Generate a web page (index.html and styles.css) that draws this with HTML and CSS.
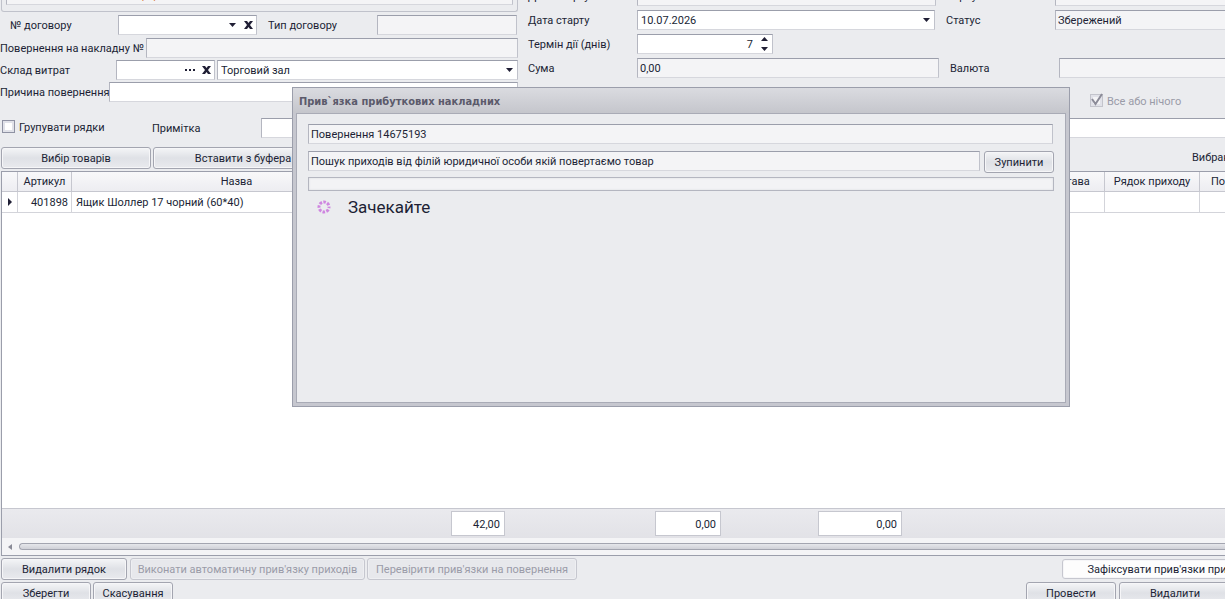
FILE: index.html
```html
<!DOCTYPE html>
<html lang="uk">
<head>
<meta charset="utf-8">
<title>Повернення</title>
<link rel="stylesheet" href="styles.css">
</head>
<body>
<main class="page">
  <form class="form">
    <section class="col">
      <div class="group"><input class="field readonly group-field" aria-label="Форма" value="фор" readonly></div>
      <div class="row row-contract">
        <label class="lbl lbl-contract" for="contract">№ договору</label>
        <div class="combo combo-contract">
          <input class="bare" id="contract">
          <button type="button" class="ic" aria-label="Список"><svg width="7" height="4"><path d="M0 0h7L3.500 4z"/></svg></button>
          <button type="button" class="ic" aria-label="Очистити"><svg width="9" height="8"><path d="M0 0h3l1.500 2L6 0h3L6 4l3 4H6L4.500 6 3 8H0l3-4z"/></svg></button>
        </div>
        <label class="lbl lbl-type" for="ctype">Тип договору</label>
        <input class="field readonly grow" id="ctype" readonly>
      </div>
      <div class="row row-invoice">
        <label class="lbl lbl-invoice" for="invoice">Повернення на накладну №</label>
        <input class="field readonly grow" id="invoice" readonly>
      </div>
      <div class="row row-store">
        <label class="lbl lbl-store" for="store">Склад витрат</label>
        <div class="combo combo-store">
          <input class="bare" id="store">
          <button type="button" class="ic" aria-label="Вибрати"><svg width="10" height="2"><path d="M0 0h2v2H0zM4 0h2v2H4zM8 0h2v2H8z"/></svg></button>
          <button type="button" class="ic" aria-label="Очистити"><svg width="9" height="8"><path d="M0 0h3l1.500 2L6 0h3L6 4l3 4H6L4.500 6 3 8H0l3-4z"/></svg></button>
        </div>
        <div class="combo grow">
          <input class="bare" aria-label="Назва складу" value="Торговий зал">
          <button type="button" class="ic" aria-label="Список"><svg width="7" height="4"><path d="M0 0h7L3.500 4z"/></svg></button>
        </div>
      </div>
      <div class="row row-reason">
        <label class="lbl lbl-reason" for="reason">Причина повернення</label>
        <input class="field grow" id="reason">
      </div>
    </section>

    <section class="col col-mid">
      <div class="row row-cut">
        <label class="lbl lbl-mid" for="created">Дата старту</label>
        <input class="field readonly grow" id="created" readonly>
      </div>
      <div class="row row-start">
        <label class="lbl lbl-mid" for="start">Дата старту</label>
        <div class="combo grow">
          <input class="bare" id="start" value="10.07.2026">
          <button type="button" class="ic" aria-label="Календар"><svg width="7" height="4"><path d="M0 0h7L3.500 4z"/></svg></button>
        </div>
      </div>
      <div class="row">
        <label class="lbl lbl-mid" for="days">Термін дії (днів)</label>
        <div class="combo combo-days">
          <input class="bare num" id="days" value="7">
          <button type="button" class="ic" aria-label="Змінити"><svg width="7" height="14"><path d="M0 4h7L3.500 0zM0 10h7L3.500 14z"/></svg></button>
        </div>
      </div>
      <div class="row row-sum">
        <label class="lbl lbl-mid" for="sum">Сума</label>
        <input class="field readonly grow" id="sum" value="0,00" readonly>
      </div>
    </section>

    <section class="col col-right">
      <div class="row row-cut">
        <label class="lbl lbl-right" for="corp">Корпус</label>
        <input class="field readonly grow open" id="corp" readonly>
      </div>
      <div class="row row-status">
        <label class="lbl lbl-right" for="status">Статус</label>
        <input class="field readonly grow open" id="status" value="Збережений" readonly>
      </div>
      <div class="row row-currency">
        <label class="lbl lbl-right" for="currency">Валюта</label>
        <input class="field readonly grow open" id="currency" readonly>
      </div>
      <label class="check check-all"><input type="checkbox" class="box" checked disabled><span class="check-text">Все або нічого</span><svg class="tick" width="14" height="13"><path d="M2 6l3.500 5L12 1" fill="none" stroke="#8b8b98" stroke-width="2"/></svg></label>
    </section>
  </form>

  <div class="row note">
    <label class="check check-group"><input type="checkbox" class="box"><span class="check-text">Групувати рядки</span></label>
    <label class="lbl lbl-note" for="note">Примітка</label>
    <input class="field grow open" id="note">
  </div>

  <div class="row tools">
    <button type="button" class="btn w150">Вибір товарів</button>
    <button type="button" class="btn w180">Вставити з буфера</button>
    <span class="selected">Вибрано</span>
  </div>

  <section class="grid">
    <div class="rows">
      <table class="table">
        <colgroup><col class="c0"><col class="c1"><col class="c2"><col class="c3"><col class="c4"><col class="c5"><col></colgroup>
        <thead><tr><th></th><th>Артикул</th><th>Назва</th><th></th><th>Підстава</th><th>Рядок приходу</th><th class="cut">Потреба</th></tr></thead>
        <tbody><tr><td class="mark"><svg width="4" height="8"><path d="M0 0l4 4-4 4z"/></svg></td><td class="right">401898</td><td>Ящик Шоллер 17 чорний (60*40)</td><td></td><td></td><td></td><td></td></tr></tbody>
      </table>
    </div>
    <div class="totals">
      <output class="total t1">42,00</output>
      <output class="total t2">0,00</output>
      <output class="total t3">0,00</output>
    </div>
    <div class="scroll"><svg width="4" height="6"><path d="M4 0v6L0 3z" fill="#8a8b97"/></svg><div class="thumb"></div></div>
  </section>

  <div class="row actions">
    <button type="button" class="btn w126">Видалити рядок</button>
    <button type="button" class="btn w235" disabled>Виконати автоматичну прив'язку приходів</button>
    <button type="button" class="btn w210" disabled>Перевірити прив'язки на повернення</button>
    <button type="button" class="btn fix">Зафіксувати прив'язки приходів</button>
  </div>
  <div class="row actions">
    <button type="button" class="btn w90">Зберегти</button>
    <button type="button" class="btn w80">Скасування</button>
    <button type="button" class="btn w90 push">Провести</button>
    <button type="button" class="btn remove">Видалити</button>
  </div>
</main>

<section class="dialog" role="dialog" aria-labelledby="dlg-title">
  <h1 class="title" id="dlg-title">Прив`язка прибуткових накладних</h1>
  <div class="body">
    <input class="field readonly ret" aria-label="Повернення" value="Повернення 14675193" readonly>
    <div class="stage">
      <input class="field readonly grow" aria-label="Етап" value="Пошук приходів від філій юридичної особи якій повертаємо товар" readonly>
      <button type="button" class="btn w70">Зупинити</button>
    </div>
    <div class="progress" role="progressbar" aria-label="Виконання"></div>
    <div class="wait">
      <svg width="14" height="14" viewBox="0 0 14 14"><g fill="none" stroke="#cf86e0" stroke-width="3"><circle cx="7" cy="7" r="5" stroke-dasharray="2.600 1.327" stroke-dashoffset="1.300"/></g></svg>
      <span>Зачекайте</span>
    </div>
  </div>
</section>
</body>
</html>
```
FILE: styles.css
```css
* { box-sizing: border-box; }
html, body { height: 100%; margin: 0; }
body {
  position: relative;
  overflow: hidden;
  background: #ebecef;
  color: #201f35;
  font: 11px/14px Roboto, "Noto Sans", sans-serif;
}
input, button, output { font: inherit; color: inherit; margin: 0; }
svg { display: block; fill: #201f35; }

.page { display: flex; flex-direction: column; height: 100%; }
.form { display: grid; grid-template-columns: minmax(0, 528fr) minmax(0, 411fr) minmax(0, 286fr); height: 108px; }
.col { display: flex; flex-direction: column; padding-right: 10px; }
.col-mid { padding-right: 0; gap: 4px; }
.col-right { padding: 0 0 0 7px; }
.row { display: flex; flex: none; }
.lbl { flex: none; padding-top: 4px; white-space: nowrap; }
.grow { flex: 1; min-width: 0; }

.field, .combo {
  height: 20px;
  border: 1px solid;
  border-color: #9b9eab #c0c2cb #d6d7dd #b4b6c0;
  border-radius: 0;
  background: #fff;
  padding: 0 3px;
  outline: none;
}
.readonly { background: #f4f4f6; padding: 0 2px; }
.open { border-right: 0; }
.combo { display: flex; align-items: center; padding-right: 1px; }
.bare { flex: 1; min-width: 0; border: 0; padding: 2px 0 0; background: none; outline: none; }
.num { text-align: right; padding-right: 5px; }
.ic { border: 0; padding: 0 3px; background: none; }

.group { height: 12px; margin: 0 0 3px 1px; padding: 0 4px; border: 1px solid #c0c2cb; border-top: 0; border-radius: 0 0 3px 3px; }
.group-field { display: block; width: 100%; margin-top: -15px; padding-left: 132px; color: #d9844a; }
.row-contract { margin: 0 1px 3px 0; }
.row-invoice, .row-store { margin-bottom: 2px; }
.lbl-contract { width: 118px; padding-left: 10px; }
.combo-contract { width: 139px; padding-right: 0; }
.combo-contract .ic, .combo-store .ic { padding: 0 3px 0 5px; }
.combo-store .ic + .ic { padding-left: 4px; }
.lbl-type { width: 120px; padding-left: 11px; }
.lbl-invoice { width: 142px; margin-right: 4px; }
.lbl-store { width: 116px; }
.combo-store { width: 99px; margin-right: 2px; padding-right: 0; }
.lbl-reason { width: 109px; }

.row-cut { height: 20px; margin: -14px 3px 0 0; }
.row-start { margin-right: 4px; }
.lbl-mid { width: 109px; }
.combo-days { width: 136px; }
.lbl-right { width: 109px; }
.row-status { margin-top: 4px; }
.row-currency { margin: 28px 0 16px 4px; }
.col-right .row-cut { margin-right: 0; }

.check { display: flex; align-items: center; gap: 4px; white-space: nowrap; }
.check-text { padding-top: 2px; }
.box { appearance: none; width: 13px; height: 13px; border: 1px solid #8f92a3; background: #fff; box-shadow: inset 0 0 0 2px #e1e2e9; }
.box:disabled { border-color: #c3c4cc; background: #f4f4f6; }
.check-all { position: relative; margin-left: 144px; height: 13px; color: #9a9ba8; }
.tick { position: absolute; left: 0; top: -1px; }

.note { margin-top: 10px; }
.check-group { width: 152px; padding-left: 2px; height: 17px; }
.lbl-note { width: 109px; }

.btn {
  flex: none;
  height: 22px;
  padding: 2px 0 0;
  border: 1px solid #a3a5b0;
  border-radius: 3px;
  background: linear-gradient(#f4f5f7, #dfe1e6 50%, #e9eaee);
  box-shadow: inset 0 0 0 1px #f6f6f8;
  white-space: nowrap;
}
.btn:disabled { border-color: #c6c7cf; background: #e7e8ec; color: #9a9ba8; box-shadow: inset 0 0 0 1px #eeeff2; }
.w70 { width: 70px; }
.w80 { width: 80px; }
.w90 { width: 90px; }
.w126 { width: 126px; margin-right: 1px; }
.w150 { width: 150px; }
.w180 { width: 180px; }
.w210 { width: 210px; }
.w235 { width: 235px; }
.tools { gap: 2px; margin: 9px 0 2px; padding-left: 1px; }
.selected { width: 33px; margin-left: auto; padding-top: 4px; overflow: hidden; }

.grid { display: flex; flex: 1; flex-direction: column; min-height: 0; margin-left: 1px; border: 1px solid #9b9eab; border-right: 0; background: #f4f4f6; }
.rows { flex: 1; min-height: 0; background: #fff; overflow: hidden; }
.table { width: 100%; table-layout: fixed; border-collapse: separate; border-spacing: 0; }
.c0 { width: 16px; }
.c1 { width: 54px; }
.c2 { width: 330px; }
.c3 { width: 627px; }
.c4 { width: 76px; }
.c5 { width: 95px; }
th, td { padding: 0 4px; height: 20px; border: solid #d3d4da; border-width: 0 1px 1px 0; white-space: nowrap; overflow: hidden; font-weight: 400; line-height: 14px; }
th { background: linear-gradient(#f8f8fa, #ededf1); border-color: #c6c7cf; padding: 0; }
td { height: 21px; padding-top: 2px; }
th:last-child, td:last-child { border-right: 0; }
.table .cut { text-align: left; padding-left: 11px; text-overflow: clip; }
.table .right { text-align: right; padding-right: 3px; }
.table .mark { padding: 0 5px 0 6px; }

.totals { display: grid; grid-template-columns: 54px 150px 66px 97px 84px; height: 30px; padding: 2px 0 0 449px; border-top: 1px solid #c6c7cf; background: linear-gradient(#eaeaee, #e2e2e7); }
.total { height: 25px; padding: 6px 4px 4px; border: 1px solid #c6c7cf; background: #fff; text-align: right; }
.t1 { grid-column: 1; }
.t2 { grid-column: 3; }
.t3 { grid-column: 5; }
.scroll { display: flex; align-items: center; gap: 7px; height: 17px; padding-left: 6px; }
.thumb { flex: 1; height: 7px; border: 1px solid #a3a5b0; border-right: 0; border-radius: 4px 0 0 4px; background: linear-gradient(#e6e7eb, #cfd0d7); }

.actions { gap: 2px; padding: 2px 0 0 1px; }
.actions:last-child { height: 19px; }
.fix { height: 20px; margin: 1px -54px 0 auto; width: 217px; background: #fdfdfd; border-color: #c6c7cf; }
.push { margin-left: auto; }
.remove { width: 112px; margin: 0 -6px 0 1px; }

.dialog { position: absolute; left: 292px; top: 87px; width: 778px; height: 320px; display: flex; flex-direction: column; padding: 0 3px 3px; border: 1px solid #9b9eab; background: #c6c7cf; }
.title { height: 25px; margin: 0 -3px; padding: 7px 6px 4px; background: linear-gradient(#dadbe0, #c5c6cc); color: #5b5a6b; font: 700 11px/14px "DejaVu Sans Condensed", "DejaVu Sans", sans-serif; }
.body { flex: 1; display: flex; flex-direction: column; padding: 10px 11px; border: 1px solid #a9abb6; background: #ebecef; }
.ret { margin-right: 1px; }
.stage { display: flex; gap: 4px; margin: 7px 0 4px; }
.progress { height: 14px; border: 1px solid #b4b6c0; background: #f3f3f5; box-shadow: inset 0 0 2px #d6d7dd; }
.wait { display: flex; align-items: center; gap: 17px; margin-top: 6px; padding-left: 9px; font-size: 17px; line-height: 20px; }
```
